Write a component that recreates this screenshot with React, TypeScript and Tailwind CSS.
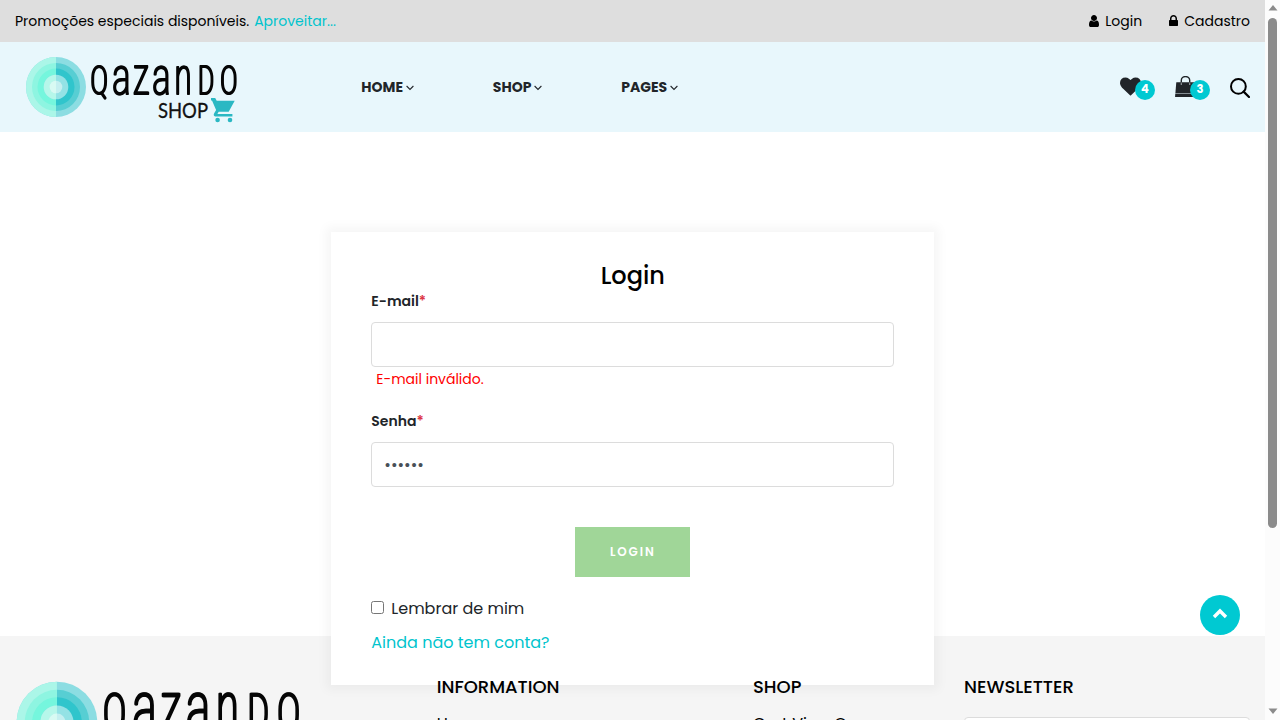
import { useId, type ReactNode } from "react";

function LogoMark() {
  return (
    <>
      <g fill="#8cdde2">
        <circle cx="56" cy="87" r="30" />
        <circle cx="56" cy="87" r="24" fill="#57ced3" />
        <circle cx="56" cy="87" r="18.5" fill="#30c5cc" />
      </g>
      <path d="M56 57a30 30 0 0 0 0 60z" fill="#abf6e8" />
      <path d="M56 63a24 24 0 0 0 0 48z" fill="#8ef5e1" />
      <path d="M56 68.5a18.5 18.5 0 0 0 0 37z" fill="#75f6dd" />
      <circle cx="56" cy="87" r="12.3" fill="#94e2e5" />
      <path d="M56 74.7a12.3 12.3 0 0 0 0 24.6z" fill="#b6f7ea" />
      <circle cx="56" cy="87" r="6.3" fill="#c5eff0" />
      <path d="M56 80.7a6.3 6.3 0 0 0 0 12.6z" fill="#d8faf3" />
    </>
  );
}

const letters = [
  { ch: "Q", x: 98.6, size: 39, width: 16.8 },
  { ch: "a", x: 120.9, size: 52, width: 17.4 },
  { ch: "z", x: 140.6, size: 53, width: 15.6 },
  { ch: "a", x: 160.9, size: 52, width: 17.4 },
  { ch: "n", x: 182.6, size: 52, width: 16.6 },
  { ch: "D", x: 205.6, size: 39, width: 15.6 },
  { ch: "O", x: 228.2, size: 39, width: 16.6 },
];

function Logo({ className }: { className: string }) {
  const id = useId();
  return (
    <svg viewBox="24 55 216 70" className={className} role="img">
      <filter id={id} filterUnits="userSpaceOnUse" x="85" y="55" width="160" height="50" colorInterpolationFilters="sRGB">
        <feOffset in="SourceGraphic" dx="1" dy="0" result="shifted" />
        <feMerge>
          <feMergeNode in="shifted" />
          <feMergeNode in="SourceGraphic" />
        </feMerge>
      </filter>
      <LogoMark />
      <g
        fontFamily="Roboto"
        fontWeight="100"
        fill="#050505"
        stroke="#050505"
        strokeWidth="2"
        strokeLinejoin="round"
        filter={`url(#${id})`}
      >
        {letters.map((l, i) => (
          <text
            key={i}
            x={l.x - l.width / 2}
            y="93.5"
            fontSize={l.size}
            textLength={l.width}
            lengthAdjust="spacingAndGlyphs"
          >
            {l.ch}
          </text>
        ))}
      </g>
      <text x="158" y="118" fontFamily="Lato, sans-serif" fontSize="20.5" textLength="50" lengthAdjust="spacingAndGlyphs" fill="#111" stroke="#111" strokeWidth="0.3">
        SHOP
      </text>
      <g fill="#2ab8c3">
        <path d="M211 98h4.2l1.5 2.7h18l-6 11h-10l-1.3 2.4h15v2.4h-17.2q-2.3-1-1-3.3l1.9-3.3-4.1-9.3H211z" />
        <circle cx="217.6" cy="120" r="2.3" />
        <circle cx="230" cy="120" r="2.3" />
      </g>
    </svg>
  );
}

function UserIcon() {
  return (
    <svg viewBox="0 0 1280 1792" className="h-[14px] w-[10px] fill-black">
      <path d="M1280 1399q0 109-62.5 187t-150.5 78h-854q-88 0-150.5-78t-62.5-187q0-85 8.5-160.5t31.5-152 58.5-131 94-89 134.5-34.5q131 128 313 128t313-128q76 0 134.5 34.5t94 89 58.5 131 31.5 152 8.5 160.5zm-256-887q0 159-112.5 271.5t-271.5 112.5-271.5-112.5-112.5-271.5 112.5-271.5 271.5-112.5 271.5 112.5 112.5 271.5z" />
    </svg>
  );
}

function LockIcon() {
  return (
    <svg viewBox="0 0 1152 1792" className="h-[14px] w-[9px] fill-black">
      <path d="M320 768h512v-192q0-106-75-181t-181-75-181 75-75 181v192zm832 96v576q0 40-28 68t-68 28h-960q-40 0-68-28t-28-68v-576q0-40 28-68t68-28h32v-192q0-184 132-316t316-132 316 132 132 316v192h32q40 0 68 28t28 68z" />
    </svg>
  );
}

function HeartIcon() {
  return (
    <svg viewBox="0 0 1792 1792" className="size-[21px] fill-[#212529]">
      <path d="M896 1664q-26 0-44-18l-624-602q-10-8-27.5-26t-55.5-65.5-68-97.5-53.5-121-23.5-138q0-220 127-344t351-124q62 0 126.5 21.5t120 58 95.5 68.5 76 68q36-36 76-68t95.5-68.5 120-58 126.5-21.5q224 0 351 124t127 344q0 221-229 450l-623 600q-18 18-44 18z" />
    </svg>
  );
}

function BagIcon() {
  return (
    <svg viewBox="0 0 21 21" className="size-[21px]">
      <path d="M1.3 6.2h18.4L20.6 17H.4z" fill="#212529" />
      <path d="M.3 17.6h20.4l.2 3.4H.1z" fill="#212529" />
      <path d="M6.3 9V4.2a4.2 3.7 0 0 1 8.4 0V9" fill="none" stroke="#212529" strokeWidth="1.4" />
      <path d="M6.3 6.5V9M14.7 6.5V9" stroke="#8f9599" strokeWidth="1.2" />
    </svg>
  );
}

function NavItem({ children, className }: { children: ReactNode; className: string }) {
  return (
    <a className={`flex items-center gap-[3px] text-sm font-bold text-[#212529] ${className}`}>
      {children}
      <svg viewBox="0 0 8 6" className="mt-px h-[6px] w-[8px]">
        <path d="M.6 1 4 4.4 7.4 1" fill="none" stroke="#212529" strokeWidth="1.1" />
      </svg>
    </a>
  );
}

function Badge({ children }: { children: ReactNode }) {
  return (
    <span className="absolute top-1 left-[15px] flex size-5 items-center justify-center rounded-full bg-[#00c9d2] text-[11.5px] font-bold text-white">
      {children}
    </span>
  );
}

function Label({ children }: { children: ReactNode }) {
  return (
    <label className="flex h-[21px] items-center text-sm font-semibold text-[#212529]">
      <span>{children}</span>
      <span className="text-[#dc3545]">*</span>
    </label>
  );
}

export default function App() {
  return (
    <div className="flex h-[720px] w-full overflow-hidden bg-white font-['Poppins','Inter',sans-serif] text-[#212529] [font-feature-settings:'cv11','ss03']">
      <div className="flex h-full min-w-0 flex-1 flex-col overflow-hidden">
        <div className="flex h-[42px] shrink-0 items-center justify-between bg-[#dedede] px-[15px] text-sm text-black">
          <p className="flex gap-[5px]">
            <span>Promoções especiais disponíveis.</span>
            <a className="text-[#00c4cd]">Aproveitar...</a>
          </p>
          <div className="flex gap-[26.5px]">
            <a className="flex items-center gap-[6px]">
              <UserIcon />
              Login
            </a>
            <a className="flex items-center gap-[6.5px]">
              <LockIcon />
              Cadastro
            </a>
          </div>
        </div>

        <header className="flex h-[90px] shrink-0 items-center bg-[#e8f7fc] pr-[15px] pl-6">
          <Logo className="mt-[6px] h-[70px] w-[216px] shrink-0" />
          <nav className="ml-[121.3px] flex flex-1">
            <NavItem className="w-[131.5px]">HOME</NavItem>
            <NavItem className="w-[128.5px]">SHOP</NavItem>
            <NavItem className="w-[60px]">PAGES</NavItem>
          </nav>
          <div className="flex items-center">
            <a className="relative mr-[34px] mt-[-1px] h-[21px]">
              <HeartIcon />
              <Badge>4</Badge>
            </a>
            <a className="relative mr-[34px] mt-[-1px] h-[21px]">
              <BagIcon />
              <Badge>3</Badge>
            </a>
            <svg viewBox="0 0 20 20" className="mt-[2px] size-5">
              <circle cx="8.4" cy="8.4" r="7.4" fill="none" stroke="#000" strokeWidth="2" />
              <path d="m13.6 13.6 5.4 5.4" stroke="#000" strokeWidth="2.2" strokeLinecap="round" />
            </svg>
          </div>
        </header>

        <main className="flex h-[504px] shrink-0 items-start justify-center pt-[100px] pl-[0.6px]">
          <form className="relative z-10 flex h-[453px] w-[603px] flex-col bg-white px-10 pt-[29px] shadow-[0_0_10px_5px_rgba(0,0,0,0.04)]">
            <h1 className="flex h-[29px] items-center justify-center text-2xl font-medium text-black">Login</h1>
            <Label>E-mail</Label>
            <input type="text" className="mt-[11px] h-[45px] w-full shrink-0 rounded-[4px] border border-[#dcdcdc] px-3 text-[#495057]" />
            <p className="flex h-6 items-center pl-[5px] text-sm text-[#f00]">E-mail inválido.</p>
            <div className="mt-[19px]">
              <Label>Senha</Label>
            </div>
            <input
              type="password"
              defaultValue="123456"
              className="mt-[11px] h-[45px] w-full shrink-0 rounded-[4px] border border-[#dcdcdc] px-3 text-base text-[#495057]"
            />
            <button
              type="button"
              className="mt-10 h-[50px] w-[115px] shrink-0 self-center bg-[#a0d698] text-[12px] font-semibold tracking-[1.9px] text-white"
            >
              LOGIN
            </button>
            <div className="mt-5 flex h-6 items-center">
              <span className="mt-[-3px] size-[13px] rounded-[2.5px] border border-[#767676] bg-white" />
              <span className="ml-[7px]">Lembrar de mim</span>
            </div>
            <a className="mt-[10px] text-[#00c4cd]">Ainda não tem conta?</a>
          </form>
        </main>

        <footer className="h-[260px] shrink-0 bg-[#f5f5f5]">
          <div className="relative z-20 flex pt-[42px] text-black">
            <Logo className="mt-px ml-[14px] h-[94px] w-[290px] shrink-0" />
            <div className="ml-[132.7px] w-[316.3px] shrink-0">
              <h4 className="-mt-[2px] h-[21px] text-[18px] leading-[21px] font-medium">INFORMATION</h4>
              <p className="mt-[15px]">Home</p>
            </div>
            <div className="w-[211px] shrink-0">
              <h4 className="-mt-[2px] h-[21px] text-[18px] leading-[21px] font-medium">SHOP</h4>
              <p className="mt-[15px]">Cart View One</p>
            </div>
            <div className="w-[286px] shrink-0">
              <h4 className="-mt-[2px] h-[21px] text-[18px] leading-[21px] font-medium">NEWSLETTER</h4>
              <div className="mt-5 h-[45px] rounded-[4px] border border-[#dcdcdc] bg-white" />
            </div>
          </div>
        </footer>
      </div>

      <div className="flex h-full w-[15px] shrink-0 flex-col items-center bg-[#fcfcfc]">
        <svg viewBox="0 0 10 6" className="mt-[5px] h-[6px] w-[10px] shrink-0 fill-[#8b8b8b]">
          <path d="M5 0 9.5 5.5h-9z" />
        </svg>
        <div className="mt-[7px] h-[510px] w-[9px] shrink-0 rounded-full bg-[#8b8b8b]" />
        <svg viewBox="0 0 10 6" className="mt-auto mb-[6px] h-[6px] w-[10px] shrink-0 fill-[#8b8b8b]">
          <path d="M5 6 9.5.5h-9z" />
        </svg>
      </div>

      <button
        type="button"
        className="absolute top-[595px] left-[1200px] z-30 flex size-10 items-center justify-center rounded-full bg-[#00c9d2]"
      >
        <svg viewBox="0 0 16 11" className="mt-[-3px] h-[11px] w-4">
          <path d="M2 9 8 3l6 6" fill="none" stroke="#fff" strokeWidth="3.4" />
        </svg>
      </button>
    </div>
  );
}
